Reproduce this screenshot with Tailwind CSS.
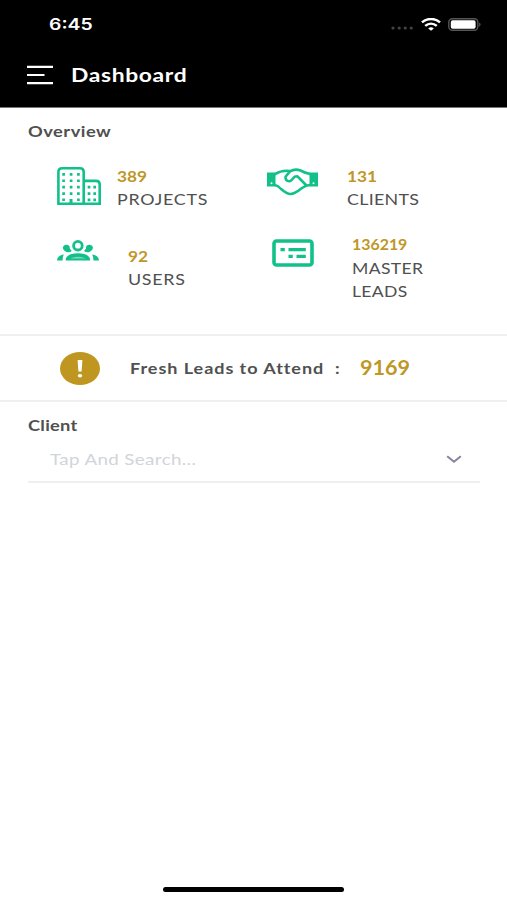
<!DOCTYPE html>
<html lang="en">
<head>
<meta charset="utf-8">
<title>Dashboard</title>
<script src="https://cdn.jsdelivr.net/npm/@tailwindcss/browser@4"></script>
</head>
<body class="h-[900px] w-[507px] overflow-hidden bg-white font-['Lato','Open_Sans',sans-serif] text-[#505050]">
<div class="flex h-[900px] flex-col whitespace-nowrap">
  <header class="h-[108px] shrink-0 border-b border-[#777] bg-black text-white">
    <div class="flex h-12 items-center justify-between pl-[49px] pr-[26px]">
      <span class="origin-left scale-x-[1.21] font-['Inter',sans-serif] text-[16px] font-semibold leading-[23px]">6:45</span>
      <div class="flex items-center">
        <svg class="mr-2 mt-2" width="23" height="4" viewBox="0 0 23 4" fill="#444"><circle cx="3" cy="2" r="1.6"/><circle cx="9.2" cy="2" r="1.6"/><circle cx="15.2" cy="2" r="1.6"/><circle cx="21.2" cy="2" r="1.6"/></svg>
        <svg class="mr-[7px]" width="20" height="13" viewBox="0 0 20 13" fill="none" stroke="#fff" stroke-width="2.5"><path d="M1 4.4C6-.1 14-.1 19 4.4M4.2 7.9C7.7 4.9 12.3 4.9 15.8 7.9"/><path d="M7.2 10.4C9 8.8 11 8.8 12.8 10.4L10 12.8z" fill="#fff" stroke="none"/></svg>
        <svg width="33" height="13" viewBox="0 0 33 13"><rect x=".8" y=".8" width="29" height="11.5" rx="3.5" fill="none" stroke="#555" stroke-width="1.4"/><rect x="2.8" y="2.3" width="24.8" height="8.5" rx="1.8" fill="#fff"/><path d="M31.2 4.5c1.8.7 1.8 3.5 0 4.2z" fill="#555"/></svg>
      </div>
    </div>
    <div class="flex h-[54px] items-center pl-[27px]">
      <svg width="26" height="20" viewBox="0 0 26 20" fill="none" stroke="#fff" stroke-width="2.2"><path d="M0 1.8h26M0 10h17.5M0 18.2h26"/></svg>
      <h1 class="ml-[18px] origin-left scale-x-[1.27] text-[18px] font-bold leading-[23px] tracking-[0.5px]">Dashboard</h1>
    </div>
  </header>

  <section class="h-[228px] shrink-0 border-b-2 border-[#eeeff0] pt-3">
    <h2 class="ml-7 w-fit origin-left scale-x-[1.22] text-[15px] font-bold leading-[23px] tracking-[0.4px]">Overview</h2>
    <div class="mt-[22px] grid grid-cols-[267px_240px] text-[15px] leading-[23px]">
      <div class="flex h-[68px] pl-[57px]">
        <svg class="mt-0.5 shrink-0" width="44" height="39" viewBox="0 0 44 39" fill="none" stroke="#12c08a" stroke-width="2.6"><path d="M1.4 36.7V5Q1.4 1.3 5 1.3H23Q26.7 1.3 26.7 5V36.7zM26.7 13.9H39Q42.7 13.9 42.7 17.5V36.7H26.7"/><path d="M14 37v-5" stroke-width="3"/><g stroke-width="2.7" stroke-dasharray="2.7 3.7"><path d="M6.6 6v28M14.1 6v25M21.4 6v28"/><path d="M32 18.8v16M37.7 18.8v16"/></g></svg>
        <div class="ml-4"><p class="w-fit origin-left scale-x-[1.15] font-bold text-[#bf9727]">389</p><p class="w-fit origin-left scale-x-[1.19] tracking-[0.65px]">PROJECTS</p></div>
      </div>
      <div class="flex h-[68px]">
        <svg class="mt-[3px] shrink-0" width="51" height="28" viewBox="0 0 51 28" fill="none" stroke="#12c08a" stroke-width="2.6" stroke-linejoin="round" stroke-linecap="round"><path d="M0 4.5h8.5v14H0zM42.5 4.5H51v14h-8.5z" fill="#12c08a" stroke="none"/><path d="M8 6.2Q15 1.8 23 3.1M8 17Q11 17.5 14 21Q20 26 23.5 26Q27.5 26 35 20Q39 17 43 17M43 6Q38 5 33.5 2.5Q28 .3 23 3.3L18.7 8.5Q17.8 12.8 22.5 13.3Q24 13.2 27.5 8.8L30.5 8.3L38.5 16.5"/><path d="M4.5 15.2v.1M46.5 15.2v.1" stroke="#fff" stroke-width="2"/></svg>
        <div class="ml-[29px]"><p class="w-fit origin-left scale-x-[1.15] font-bold text-[#bf9727]">131</p><p class="w-fit origin-left scale-x-[1.19] tracking-[0.25px]">CLIENTS</p></div>
      </div>
      <div class="flex h-[90px] pl-[57px]">
        <svg class="mt-[6.5px] shrink-0" width="42" height="22" viewBox="0 0 42 22" fill="#12c08a"><circle cx="20.9" cy="5.7" r="4.3" fill="none" stroke="#12c08a" stroke-width="2.8"/><path d="M8.8 4.8Q10.8 4.4 12.4 6Q12.5 9.8 14.8 11Q12.2 13.2 9 11.8Q5.8 10 5.8 7.8Q6 5.3 8.8 4.8zM33 4.8Q31 4.4 29.4 6Q29.3 9.8 27 11Q29.6 13.2 32.8 11.8Q36 10 36 7.8Q35.8 5.3 33 4.8zM0 20.5Q.2 15.5 6.8 14.5Q5.5 17 5.5 20.5zM42 20.5Q41.8 15.5 35.2 14.5Q36.5 17 36.5 20.5zM8.7 20.5V19Q10.5 13.3 20.9 13.2Q31.3 13.3 33.1 19v1.5z"/><path d="M13 18.5Q21 14.9 29 18.5z" fill="#7fdcb8"/></svg>
        <div class="ml-[29px] mt-3"><p class="w-fit origin-left scale-x-[1.15] font-bold text-[#bf9727]">92</p><p class="w-fit origin-left scale-x-[1.19] tracking-[0.6px]">USERS</p></div>
      </div>
      <div class="flex h-[90px] pl-[5px]">
        <svg class="mt-[6px] shrink-0" width="42" height="28" viewBox="0 0 42 28" fill="none" stroke="#12c08a" stroke-width="3.6"><rect x="2" y="2" width="38" height="24" rx="2.5"/><path d="M8.5 10.7h4.3M16.5 10.7h17.3M16.5 17.4h4.3M24.5 17.4h9.3" stroke-width="3.3"/></svg>
        <div class="ml-[38px]"><p class="w-fit origin-left scale-x-[1.06] font-bold text-[#bf9727]">136219</p><p class="w-fit origin-left scale-x-[1.17] pt-px tracking-[0.3px]">MASTER<br>LEADS</p></div>
      </div>
    </div>
  </section>

  <section class="flex h-[66px] shrink-0 items-center border-b-2 border-[#eeeff0] pl-[60px]">
    <svg class="shrink-0" width="40" height="33" viewBox="0 0 40 33"><ellipse cx="20" cy="16.5" rx="20" ry="16.5" fill="#bf9720"/><path d="M17.6 8h4.8l-.8 11.5h-3.2z" fill="#fff"/><ellipse cx="20" cy="23.8" rx="2.2" ry="1.7" fill="#fff"/></svg>
    <p class="ml-[30px] w-[230px] text-[15px] font-bold leading-[23px]"><span class="inline-block origin-left scale-x-[1.2] whitespace-pre tracking-[0.8px]">Fresh Leads to Attend  :</span></p>
    <strong class="mb-0.5 origin-left scale-x-[1.08] text-[20px] leading-[23px] text-[#bf9727]">9169</strong>
  </section>

  <section class="px-7 pt-3">
    <h2 class="w-fit origin-left scale-x-[1.22] text-[15px] font-bold leading-[23px] tracking-[0.2px]">Client</h2>
    <div class="flex h-[46px] w-[452px] items-center justify-between border-b-2 border-[#eeeff0] pl-[22px] pr-[18px]">
      <span class="origin-left scale-x-[1.25] text-[15px] leading-[23px] tracking-[0.3px] text-[#d1d5d9]">Tap And Search...</span>
      <svg width="16" height="9" viewBox="0 0 16 9" fill="none" stroke="#85859b" stroke-width="2"><path d="M1.2 1.2L8 6.8L14.8 1.2"/></svg>
    </div>
  </section>
  <div class="mb-2 ml-[163px] mt-auto h-[5px] w-[181px] rounded-full bg-black"></div>
</div>
</body>
</html>
